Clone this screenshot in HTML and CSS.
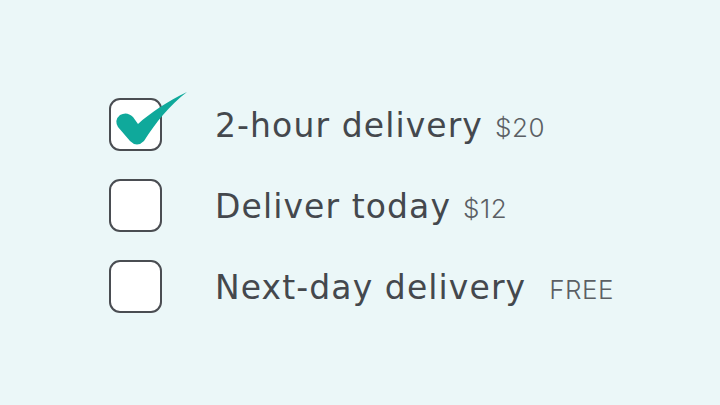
FILE: index.html
```html
<!DOCTYPE html>
<html>
<head>
<meta charset="utf-8">
<link rel="stylesheet" href="styles.css">
</head>
<body>
<ul class="options">
  <li class="option">
    <span class="box checked">
      <svg class="tick" viewBox="100 85 100 70" width="100" height="70">
        <path d="M187 92 C168 101 150 113 138 124 L133 117 Q127 111 120 115 Q114 120 118 127 L130 141 Q137 148 144 141 C156 122 170 105 187 92 Z" fill="#0fa99b"/>
      </svg>
    </span>
    <span class="text"><span class="label">2-hour delivery</span><span class="price">$20</span></span>
  </li>
  <li class="option">
    <span class="box"></span>
    <span class="text"><span class="label">Deliver today</span><span class="price">$12</span></span>
  </li>
  <li class="option">
    <span class="box"></span>
    <span class="text"><span class="label">Next-day delivery</span><span class="price free">FREE</span></span>
  </li>
</ul>
</body>
</html>
```
FILE: styles.css
```css
html, body {
  margin: 0;
  padding: 0;
  background: #ebf7f8;
  width: 720px;
  height: 405px;
  overflow: hidden;
  font-family: "DejaVu Sans", sans-serif;
}
.options {
  list-style: none;
  margin: 0;
  padding: 98px 0 0 109px;
  display: flex;
  flex-direction: column;
  gap: 28px;
}
.option {
  display: flex;
  align-items: center;
  height: 53px;
}
.box {
  position: relative;
  box-sizing: border-box;
  width: 53px;
  height: 53px;
  border: 2px solid #4a4d52;
  border-radius: 11px;
  background: #fff;
  flex: none;
  margin-right: 53px;
}
.tick {
  position: absolute;
  left: -11px;
  top: -15px;
}
.text {
  display: flex;
  align-items: baseline;
  padding-top: 2px;
}
.label {
  font-size: 33px;
  letter-spacing: 1.1px;
  color: #44484d;
}
.price {
  font-family: Inter, "Noto Sans", sans-serif;
  font-size: 26px;
  font-weight: 300;
  letter-spacing: 0.5px;
  color: #5b5f64;
  margin-left: 12px;
}
.price.free {
  margin-left: 23px;
}
```
